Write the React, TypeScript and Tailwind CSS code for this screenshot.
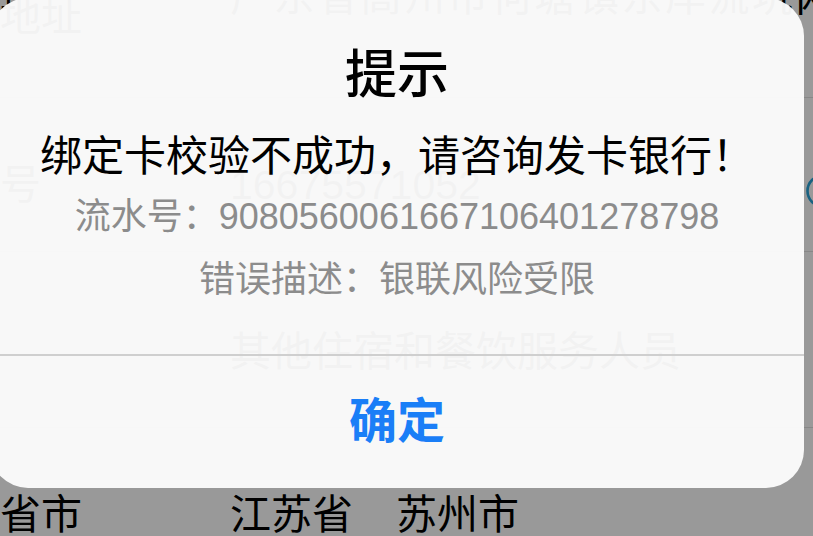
export default function App() {
  return (
    <div className="relative w-[813px] h-[536px] overflow-hidden bg-white font-['Liberation_Sans','Noto_Sans_CJK_SC',sans-serif]">
      {/* underlying form page */}
      <div className="ml-[-82px] w-[1000px] flex flex-col text-[41px] leading-[50px] text-black">
        <div className="flex items-start mt-[-62px] h-[160px] border-b border-[#e2e2e2]">
          <span className="w-[312px] shrink-0 mt-[54px]">详细地址</span>
          <span className="mt-[34px] tracking-[2.5px] whitespace-nowrap">广东省高州市何塘镇东岸流坑网</span>
        </div>
        <div className="flex items-start pt-[62px] h-[154px] border-b border-[#e2e2e2]">
          <span className="w-[312px] shrink-0">手机号</span>
          <span className="w-[576px] shrink-0 text-[#222]">16675571052</span>
          <svg width="34" height="34" viewBox="0 0 34 34" className="mt-[14px] shrink-0">
            <circle cx="17" cy="17" r="15.5" fill="none" stroke="#2aa3d8" strokeWidth="2.6" />
          </svg>
        </div>
        <div className="flex items-start pt-[75px] h-[176px] border-b border-[#e2e2e2]">
          <span className="w-[312px] shrink-0">职业</span>
          <span>其他住宿和餐饮服务人员</span>
        </div>
        <div className="flex items-start pt-[62px]">
          <span className="w-[312px] shrink-0">所在省市</span>
          <span>江苏省</span>
          <span className="ml-[43px]">苏州市</span>
        </div>
      </div>

      {/* dim overlay */}
      <div className="absolute inset-0 bg-black/40" />

      {/* alert */}
      <div className="absolute left-[-10px] top-[-2px] w-[814px] h-[490px] rounded-[38px] bg-[rgba(252,252,252,0.96)] flex flex-col">
        <div className="flex flex-col items-center pt-[47px]">
          <div className="text-[52px] leading-[60px] font-medium text-black">提示</div>
          <div className="mt-[27px] text-[42px] leading-[50px] text-black whitespace-nowrap">绑定卡校验不成功，请咨询发卡银行！</div>
          <div className="mt-[15px] text-[36px] leading-[40px] text-[#8c8c8c] whitespace-nowrap">流水号：9080560061667106401278798</div>
          <div className="mt-[23px] text-[36px] leading-[40px] text-[#8c8c8c] whitespace-nowrap">错误描述：银联风险受限</div>
        </div>
        <div className="mt-[54px] h-[2px] bg-[#cfcfcf]" />
        <div className="flex-1 flex items-center justify-center">
          <span className="text-[48px] leading-none font-bold text-[#1a7ef7]">确定</span>
        </div>
      </div>
    </div>
  );
}
